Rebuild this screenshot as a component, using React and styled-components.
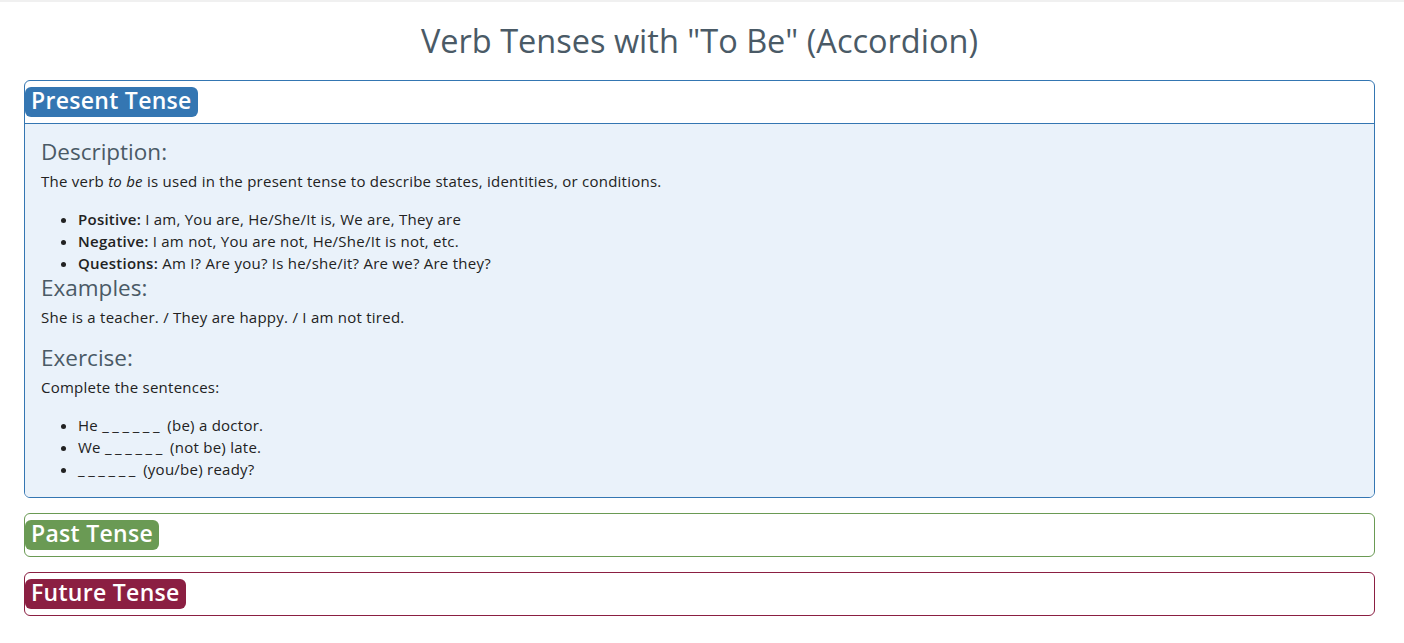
import { useState } from "react";
import styled, { createGlobalStyle } from "styled-components";

const GlobalStyle = createGlobalStyle`
  html, body {
    margin: 0;
    padding: 0;
    background: #ffffff;
  }
  body {
    font-family: "Open Sans", "Noto Sans", Arial, sans-serif;
    color: #222;
  }
`;

const tenses = [
  { id: "present", title: "Present Tense", color: "#3476b2" },
  { id: "past", title: "Past Tense", color: "#6a9a54" },
  { id: "future", title: "Future Tense", color: "#8b1f42" },
];

const App = () => {
  const [open, setOpen] = useState("present");

  return (
    <>
      <GlobalStyle />
      <Page>
        <Title>Verb Tenses with "To Be" (Accordion)</Title>
        <List>
          {tenses.map((t) => (
            <Item key={t.id} $color={t.color}>
              <Header
                $open={open === t.id}
                $color={t.color}
                onClick={() => setOpen(open === t.id ? null : t.id)}
              >
                <Badge $color={t.color}>{t.title}</Badge>
              </Header>
              {open === t.id && t.id === "present" && (
                <Panel>
                  <Heading>Description:</Heading>
                  <Text>
                    The verb <em>to be</em> is used in the present tense to
                    describe states, identities, or conditions.
                  </Text>
                  <Bullets>
                    <li>
                      <strong>Positive:</strong> I am, You are, He/She/It is,
                      We are, They are
                    </li>
                    <li>
                      <strong>Negative:</strong> I am not, You are not,
                      He/She/It is not, etc.
                    </li>
                    <li>
                      <strong>Questions:</strong> Am I? Are you? Is he/she/it?
                      Are we? Are they?
                    </li>
                  </Bullets>
                  <Heading>Examples:</Heading>
                  <Text>She is a teacher. / They are happy. / I am not tired.</Text>
                  <Heading>Exercise:</Heading>
                  <Text>Complete the sentences:</Text>
                  <Bullets>
                    <li>He <Blank>______</Blank> (be) a doctor.</li>
                    <li>We <Blank>______</Blank> (not be) late.</li>
                    <li><Blank>______</Blank> (you/be) ready?</li>
                  </Bullets>
                </Panel>
              )}
            </Item>
          ))}
        </List>
      </Page>
    </>
  );
};

const Page = styled.div`
  border-top: 2px solid #f0f0f0;
  padding: 16px 29px 24px 24px;
`;

const Title = styled.h1`
  margin: 0 0 16px;
  text-align: center;
  font-size: 32.5px;
  font-weight: 400;
  line-height: 46px;
  color: #4a5a66;
`;

const List = styled.div`
  display: flex;
  flex-direction: column;
  gap: 15px;
`;

const Item = styled.section`
  border: 1px solid ${(p) => p.$color};
  border-radius: 6px;
  overflow: hidden;
`;

const Header = styled.div`
  display: flex;
  align-items: center;
  padding: 6px 0;
  cursor: pointer;
  border-bottom: ${(p) => (p.$open ? `1px solid ${p.$color}` : "none")};
`;

const Badge = styled.span`
  background: ${(p) => p.$color};
  color: #fff;
  font-size: 23px;
  font-weight: 600;
  line-height: 26px;
  padding: 0 6px 4px;
  border-radius: 6px;
  letter-spacing: 0.3px;
`;

const Panel = styled.div`
  background: #eaf2fa;
  padding: 14px 16px 17px;
`;

const Heading = styled.h3`
  margin: 0 0 5px;
  font-size: 22.5px;
  font-weight: 400;
  line-height: 28px;
  color: #4a5a66;
`;

const Text = styled.p`
  margin: 0 0 16px;
  font-size: 15px;
  line-height: 21px;
  letter-spacing: 0.25px;
  color: #222;
`;

const Bullets = styled.ul`
  margin: 0;
  padding-left: 37px;
  font-size: 15px;
  line-height: 22px;
  letter-spacing: 0.25px;
  color: #222;

  strong {
    font-weight: 600;
  }
`;

const Blank = styled.span`
  letter-spacing: 3.6px;
`;

export default App;
